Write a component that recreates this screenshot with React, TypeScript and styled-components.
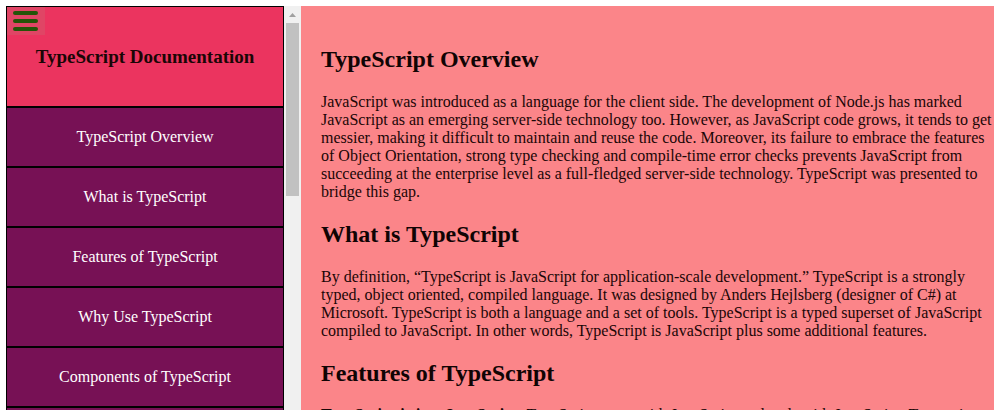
import React from "react";
import styled, { createGlobalStyle } from "styled-components";

const GlobalStyle = createGlobalStyle`
  * { box-sizing: border-box; }
  body {
    margin: 0;
    background: #fff;
    font-family: "Liberation Serif", "Times New Roman", serif;
    font-size: 16px;
    line-height: 18px;
    color: #1a0606;
  }
`;

const Page = styled.div`
  display: flex;
  height: 100vh;
  padding: 6px 0 0 6px;
  overflow: hidden;
`;

const Sidebar = styled.aside`
  display: flex;
  flex: 0 0 295px;
  position: relative;
  overflow: hidden;
`;

const Nav = styled.nav`
  flex: 1;
`;

const Brand = styled.header`
  display: flex;
  align-items: center;
  justify-content: center;
  height: 101px;
  border: 1px solid #000;
  background: #eb345f;
`;

const BrandTitle = styled.h1`
  margin: 0;
  font-size: 19px;
  line-height: 20px;
`;

const MenuButton = styled.button`
  position: absolute;
  top: 1px;
  left: 1px;
  display: flex;
  padding: 4px 7px 4px 6px;
  border: 0;
  background: #e04565;
  cursor: pointer;
`;

const NavLink = styled.a`
  display: flex;
  align-items: center;
  justify-content: center;
  height: 60px;
  border: 1px solid #000;
  background: #771155;
  color: #fff;
  text-decoration: none;
`;

const ScrollTrack = styled.div`
  display: flex;
  flex-direction: column;
  align-items: center;
  flex: 0 0 17px;
  background: #f0f0f0;
`;

const ScrollArrow = styled.svg`
  flex: none;
`;

const ScrollThumb = styled.div`
  width: 13px;
  height: 173px;
  background: #c1c1c1;
`;

const Main = styled.main`
  flex: 1;
  min-width: 0;
  padding: 40px 0 0 20px;
  background: #fb8589;
  overflow: hidden;
`;

const Heading = styled.h2`
  margin: 0 0 20px;
  font-size: 24px;
  line-height: 27px;
  color: #100404;
`;

const Paragraph = styled.p<{ $compact?: boolean }>`
  margin: 0 0 20px;
  line-height: ${({ $compact }) => ($compact ? "16px" : "18px")};
`;

const Lead = styled.strong`
  font-weight: 700;
`;

const links = [
  "TypeScript Overview",
  "What is TypeScript",
  "Features of TypeScript",
  "Why Use TypeScript",
  "Components of TypeScript",
  "Environment Setup",
];

const sections: { title: string; lead?: string; text: string }[] = [
  {
    title: "TypeScript Overview",
    text: "JavaScript was introduced as a language for the client side. The development of Node.js has marked JavaScript as an emerging server-side technology too. However, as JavaScript code grows, it tends to get messier, making it difficult to maintain and reuse the code. Moreover, its failure to embrace the features of Object Orientation, strong type checking and compile-time error checks prevents JavaScript from succeeding at the enterprise level as a full-fledged server-side technology. TypeScript was presented to bridge this gap.",
  },
  {
    title: "What is TypeScript",
    text: "By definition, “TypeScript is JavaScript for application-scale development.” TypeScript is a strongly typed, object oriented, compiled language. It was designed by Anders Hejlsberg (designer of C#) at Microsoft. TypeScript is both a language and a set of tools. TypeScript is a typed superset of JavaScript compiled to JavaScript. In other words, TypeScript is JavaScript plus some additional features.",
  },
  {
    title: "Features of TypeScript",
    lead: "TypeScript is just JavaScript.",
    text: "TypeScript starts with JavaScript and ends with JavaScript. Typescript adopts the basic building blocks of your program from JavaScript.",
  },
];

const toId = (title: string) => title.toLowerCase().replace(/ /g, "-");

export default function App() {
  return (
    <>
      <GlobalStyle />
      <Page>
        <Sidebar>
          <Nav aria-label="Documentation">
            <Brand>
              <BrandTitle>TypeScript Documentation</BrandTitle>
            </Brand>
            {links.map((title) => (
              <NavLink key={title} href={`#${toId(title)}`}>
                {title}
              </NavLink>
            ))}
          </Nav>
          <ScrollTrack aria-hidden="true">
            <ScrollArrow width="17" height="17" viewBox="0 0 17 17">
              <path d="M5 11 L8.5 7 L12 11 Z" fill="#a0a0a0" />
            </ScrollArrow>
            <ScrollThumb />
          </ScrollTrack>
          <MenuButton type="button" aria-label="Toggle menu">
            <svg width="25" height="20" viewBox="0 0 25 20" fill="#245408">
              <rect width="25" height="4" rx="2" />
              <rect y="8" width="25" height="4" rx="2" />
              <rect y="16" width="25" height="4" rx="2" />
            </svg>
          </MenuButton>
        </Sidebar>
        <Main>
          {sections.map(({ title, lead, text }) => (
            <section key={title} id={toId(title)}>
              <Heading>{title}</Heading>
              <Paragraph $compact={Boolean(lead)}>
                {lead && <Lead>{lead} </Lead>}
                {text}
              </Paragraph>
            </section>
          ))}
        </Main>
      </Page>
    </>
  );
}
